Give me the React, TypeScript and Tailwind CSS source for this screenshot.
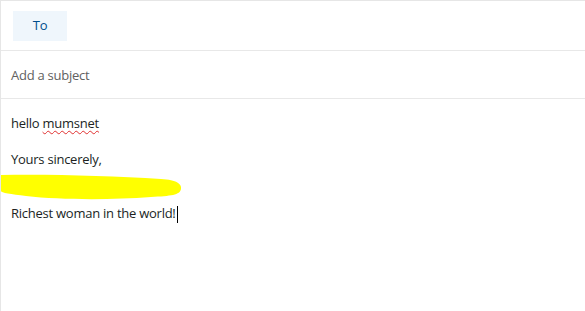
import React from "react";

const FONT = { fontFamily: '"Open Sans", "Noto Sans", sans-serif' };

function Scribble() {
  return (
    <svg
      className="absolute left-0 top-[-30px] pointer-events-none"
      width="185"
      height="30"
      viewBox="0 0 185 30"
    >
      <path
        d="M0 1 C50 0 110 2 160 5 C176 6 181 10 180 15 C179 21 170 22 150 23 C110 26 60 26 25 22 C10 20 0 19 0 17 Z"
        fill="#ffff00"
      />
    </svg>
  );
}

export default function App() {
  return (
    <div
      className="w-[585px] h-[311px] bg-white border-t border-l border-[#e6e6e6] text-[13px] tracking-[-0.25px] text-[#201f1e] overflow-hidden"
      style={FONT}
    >
      <div className="h-[50px] flex items-center px-3 border-b border-[#e8e8e8]">
        <button className="w-[54px] h-[30px] bg-[#eff6fc] text-[#004e8c] text-[13px] mt-[1px]">
          To
        </button>
      </div>
      <div className="h-[48px] flex items-center px-[10px] pt-[2px] border-b border-[#e8e8e8] text-[#616161]">
        Add a subject
      </div>
      <div className="px-[10px] pt-[15px]">
        <p className="h-[18px] leading-[18px]">
          hello{" "}
          <span className="underline decoration-wavy decoration-[#e03030] decoration-1 underline-offset-2">
            mumsnet
          </span>
        </p>
        <p className="h-[18px] leading-[18px] mt-[18px]">Yours sincerely,</p>
        <div className="h-[36px]" />
        <p className="relative h-[18px] leading-[18px] -ml-[10px] pl-[10px]">
          <Scribble />
          <span className="relative">Richest woman in the world!</span>
          <span className="inline-block w-px h-[17px] bg-black align-middle ml-[1px]" />
        </p>
      </div>
    </div>
  );
}
